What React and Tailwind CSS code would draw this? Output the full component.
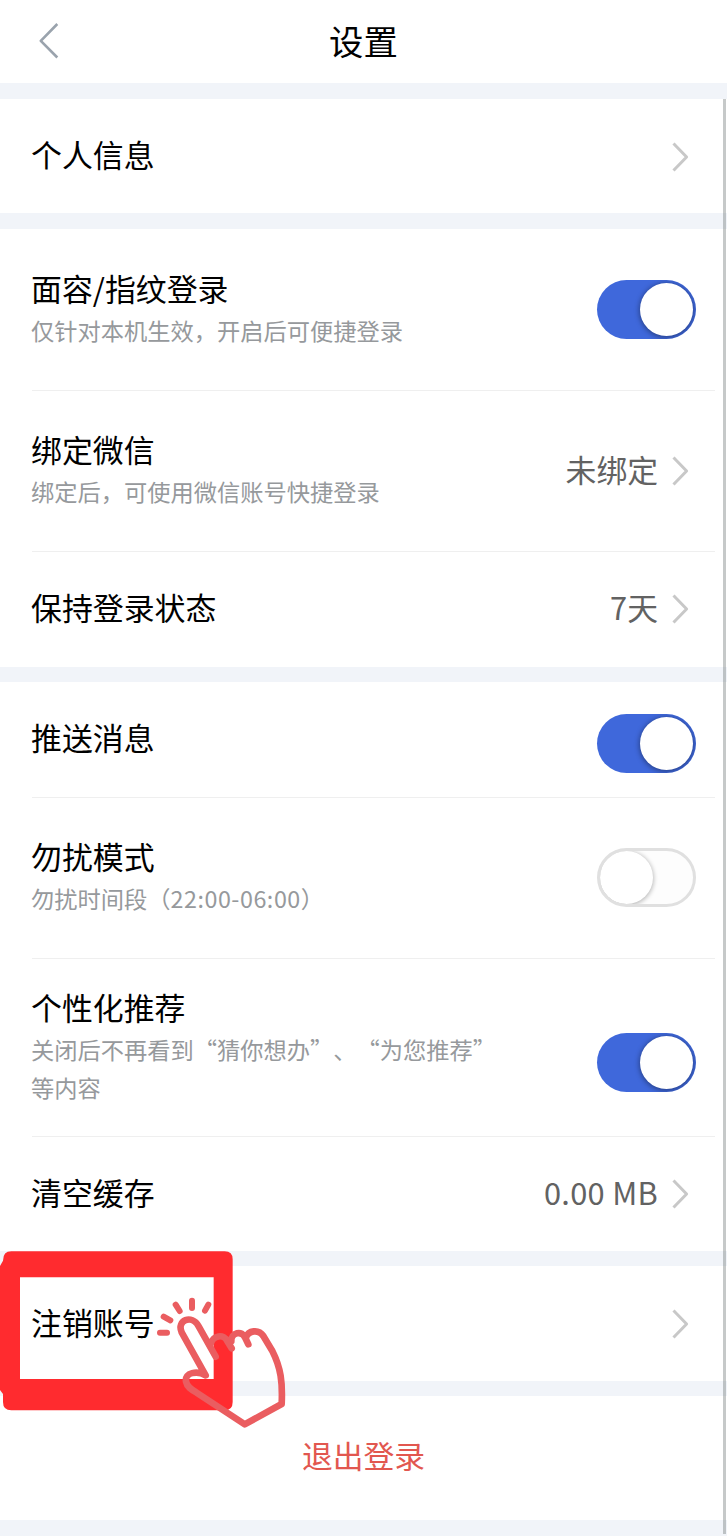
function Chevron() {
  return (
    <svg viewBox="0 0 17 30" className="h-[30px] w-[17px] shrink-0" fill="none" stroke="#c8c8c8" strokeWidth="3">
      <path d="M1.5 1.5 L14.6 15 L1.5 28.5" strokeLinejoin="round" />
    </svg>
  );
}

function Switch({ on }) {
  if (on) {
    return (
      <span className="flex h-[59px] w-[99px] shrink-0 items-center justify-end overflow-hidden rounded-full bg-[#3f68db] pr-[3.5px]">
        <span className="size-[53px] rounded-full bg-white shadow-[0_1px_5px_1px_rgba(0,0,0,0.35)]" />
      </span>
    );
  }
  return (
    <span className="flex h-[59px] w-[99px] shrink-0 items-center overflow-hidden rounded-full border-[3px] border-[#e0e0e0] bg-[#fdfdfd]">
      <span className="size-[53px] rounded-full bg-white shadow-[0_1px_4px_1px_rgba(0,0,0,0.25)]" />
    </span>
  );
}

function Label({ title, children }) {
  return (
    <div className="pb-[5px]">
      <p className="text-[30.9px] leading-[44px] text-black">{title}</p>
      {children && (
        <p className="pt-px text-[23.25px] leading-[38px] text-[#96999c] [text-spacing-trim:space-all]">{children}</p>
      )}
    </div>
  );
}

function Value({ children }) {
  return (
    <div className="flex items-center gap-[14px] text-[30.8px] leading-[44px] text-[#626262]">
      <span className="pb-[5px]">{children}</span>
      <Chevron />
    </div>
  );
}

function Divider() {
  return <div className="ml-8 mr-3 h-px bg-[#efefef]" />;
}

function Gap() {
  return <div className="h-[15px] bg-[#f1f4f9]" />;
}

function TapMarker() {
  return (
    <svg viewBox="0 0 900 630" className="pointer-events-none absolute -top-9 left-0 h-[210px] w-[300px]" fill="none">
      <path
        fill="#ff2b2f"
        fillRule="evenodd"
        d="M34 64 H674 Q698 64 698 88 V516 Q698 541 674 541 H34 Q9 541 9 516 V492 L0 480 V108 L9 92 Q9 64 34 64 Z M60 142 V447 H641 V142 Z"
      />
      <g stroke="#ea5d60" strokeWidth="18" strokeLinecap="round" strokeLinejoin="round">
        <path d="M480 308 H501 M491 260 L511 271 M527 224 L539 243 M576 212 V234 M625 224 L615 242" />
        <path
          strokeWidth="20"
          d="M647 380 L596 289 C575 252 529 271 545 307 L617 436 C592 421 553 427 558 455 C561 471 574 479 590 488 L734 583 L845 522 C848 458 843 414 817 363 L790 318 C775 296 745 302 738 322"
        />
        <path strokeWidth="20" d="M632 342 C638 316 672 310 682 334 L695 355 M694 334 C692 308 727 299 736 324 L745 343" />
      </g>
    </svg>
  );
}

export default function App() {
  return (
    <div className="relative h-[1536px] w-[727px] overflow-hidden bg-white font-['Noto_Sans_CJK_SC',sans-serif]">
      <header className="relative flex h-[83px] items-center justify-center">
        <svg viewBox="0 0 20 36" className="absolute left-[39px] top-[23px] h-9 w-5" fill="none" stroke="#9aa3ad" strokeWidth="2.6">
          <path d="M18.3 1 L1.8 17.8 L18.3 34.5" strokeLinejoin="round" />
        </svg>
        <h1 className="pb-1 text-[34.4px] leading-[50px] text-black">设置</h1>
      </header>
      <div className="h-4 bg-[#f1f4f9]" />

      <section className="flex h-[114px] items-center justify-between pl-[31px] pr-[38px] pt-px">
        <Label title="个人信息" />
        <Chevron />
      </section>
      <div className="h-4 bg-[#f1f4f9]" />

      <section>
        <div className="flex h-[161px] items-center justify-between px-[31px]">
          <Label title="面容/指纹登录">仅针对本机生效，开启后可便捷登录</Label>
          <Switch on />
        </div>
        <Divider />
        <div className="flex h-[160px] items-center justify-between pl-[31px] pr-[38px]">
          <Label title="绑定微信">绑定后，可使用微信账号快捷登录</Label>
          <Value>未绑定</Value>
        </div>
        <Divider />
        <div className="flex h-[115px] items-center justify-between pb-px pl-[31px] pr-[38px]">
          <Label title="保持登录状态" />
          <Value>7天</Value>
        </div>
      </section>
      <Gap />

      <section>
        <div className="flex h-[115px] items-center justify-between px-[31px]">
          <Label title="推送消息" />
          <div className="pt-[7px]">
            <Switch on />
          </div>
        </div>
        <Divider />
        <div className="flex h-[160px] items-center justify-between px-[31px] pb-px">
          <Label title="勿扰模式">
            勿扰时间段（<span className="tracking-[0.55px]">22:00-06:00</span>）
          </Label>
          <Switch />
        </div>
        <Divider />
        <div className="flex h-[177px] items-center justify-between px-[31px]">
          <Label title="个性化推荐">
            关闭后不再看到“猜你想办”、“为您推荐”
            <br />
            等内容
          </Label>
          <div className="pt-[30px]">
            <Switch on />
          </div>
        </div>
        <Divider />
        <div className="flex h-[114px] items-center justify-between pl-[31px] pr-[38px]">
          <Label title="清空缓存" />
          <Value>
            <span className="tracking-[0.3px]">0.00 MB</span>
          </Value>
        </div>
      </section>
      <Gap />

      <section className="relative flex h-[115px] items-center justify-between pl-[31px] pr-[38px] pt-px">
        <Label title="注销账号" />
        <Chevron />
        <TapMarker />
      </section>
      <Gap />

      <button type="button" className="flex h-[124px] w-full items-center justify-center pb-[5px] text-[30.8px] text-[#e2574f]">
        退出登录
      </button>
      <div className="h-4 bg-[#f1f4f9]" />

      {/* scrollbar */}
      <div className="absolute right-[1.5px] top-[99px] h-[1435px] w-[2.5px] bg-[#5d6464]/35" />
    </div>
  );
}
